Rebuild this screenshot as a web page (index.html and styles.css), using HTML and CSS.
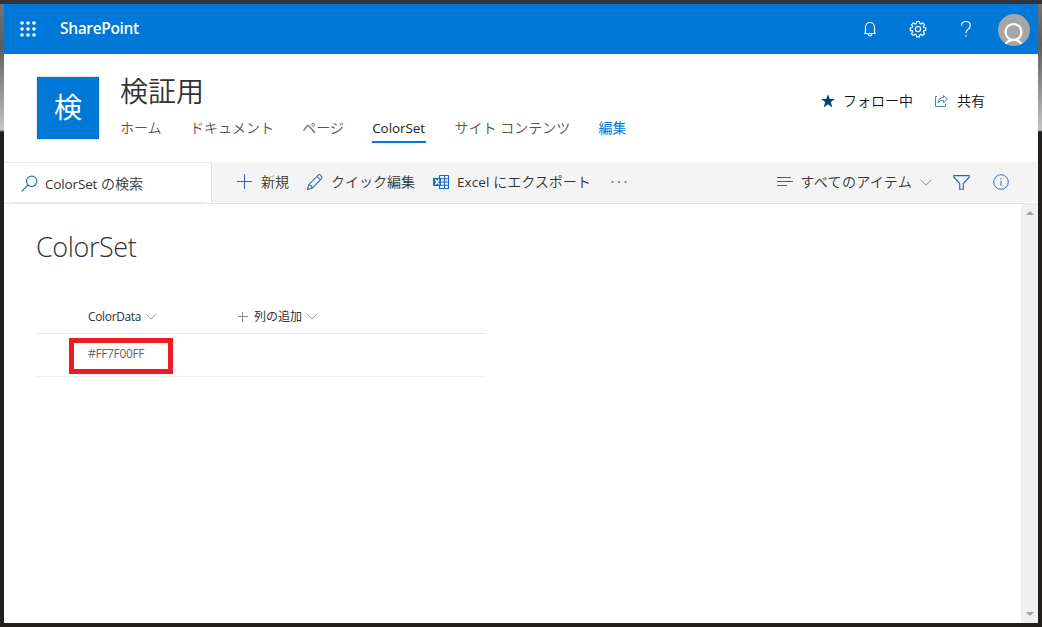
FILE: index.html
```html
<!DOCTYPE html>
<html lang="ja">
<head>
  <meta charset="UTF-8">
  <meta name="viewport" content="width=device-width, initial-scale=1.0">
  <title>ColorSet - 検証用</title>
  <link rel="stylesheet" href="styles.css">
</head>
<body>
  <div class="window">
    <header class="suite-bar">
      <svg class="waffle" width="16" height="16" viewBox="0 0 16 16" fill="#fff">
        <circle cx="2" cy="2" r="1.8"/><circle cx="8" cy="2" r="1.8"/><circle cx="14" cy="2" r="1.8"/>
        <circle cx="2" cy="8" r="1.8"/><circle cx="8" cy="8" r="1.8"/><circle cx="14" cy="8" r="1.8"/>
        <circle cx="2" cy="14" r="1.8"/><circle cx="8" cy="14" r="1.8"/><circle cx="14" cy="14" r="1.8"/>
      </svg>
      <span class="brand">SharePoint</span>
      <div class="suite-actions">
        <svg width="16" height="16" viewBox="0 0 16 16" fill="none" stroke="#fff" stroke-width="1.2">
          <path d="M2 12.5h12M3.5 12.5V6a4.5 4.5 0 0 1 9 0v6.5M6.2 13a1.8 1.8 0 0 0 3.6 0"/>
        </svg>
        <svg width="18" height="18" viewBox="0 0 18 18" fill="none" stroke="#fff" stroke-width="1.2">
          <path d="M7.6 1.5h2.8l.4 2 1.1.5 1.7-1.2 1.9 1.9L14.3 6.4l.4 1.1 2 .3v2.6l-2 .4-.4 1.1 1.2 1.7-1.9 1.9-1.7-1.2-1.1.5-.4 2H7.6l-.4-2-1.1-.5-1.7 1.2-1.9-1.9 1.2-1.7-.4-1.1-2-.4V7.8l2-.3.4-1.1-1.2-1.7 1.9-1.9L6.1 4l1.1-.5z"/>
          <circle cx="9" cy="9.1" r="2.6"/>
        </svg>
        <svg width="12" height="18" viewBox="0 0 12 18" fill="none" stroke="#fff" stroke-width="1.2">
          <path d="M1.5 5.5C1.5 2.8 3.3 1.5 5.8 1.5s4.5 1.5 4.5 4c0 3.6-4.3 4-4.3 7v.8M6 15.2v1.6"/>
        </svg>
        <svg class="avatar" width="32" height="32" viewBox="0 0 32 32">
          <circle cx="16" cy="16" r="16" fill="#a6a6a6"/>
          <g fill="none" stroke="#fff" stroke-width="2.2">
            <circle cx="15.5" cy="18" r="8"/>
            <path d="M7.5 30c2-3 5-4.2 8-4.200s6 1.200 8 4.200"/>
          </g>
        </svg>
      </div>
    </header>

    <section class="site-header">
      <div class="site-logo">検</div>
      <div class="site-info">
        <h1>検証用</h1>
        <nav class="site-nav">
          <a>ホーム</a>
          <a>ドキュメント</a>
          <a>ページ</a>
          <a class="active">ColorSet</a>
          <a>サイト コンテンツ</a>
          <a class="edit">編集</a>
        </nav>
      </div>
      <div class="site-actions">
        <svg width="14" height="14" viewBox="0 0 14 14" fill="#004578">
          <path d="M7 0l1.700 4.900H14L9.800 8l1.500 5.500L7 10.300l-4.300 3.200L4.200 8 0 4.900h5.300z"/>
        </svg>
        <span>フォロー中</span>
        <svg class="share" width="15" height="14" viewBox="0 0 15 14" fill="none" stroke="#4a83c8">
          <path d="M3 2.500H1.500v10h10V9.500M9.500 1.500l4 3.500-4 3.500v-2c-3 0-4.500.8-5.500 2.500.2-3.500 2.200-5.300 5.500-5.500z"/>
        </svg>
        <span>共有</span>
      </div>
    </section>

    <div class="command-bar">
      <div class="search-box">
        <svg width="17" height="17" viewBox="0 0 17 17" fill="none" stroke="#2f6fc0" stroke-width="1.2">
          <circle cx="10.700" cy="6.300" r="5.200"/><path d="M7 10L.7 16.300"/>
        </svg>
        <span><span class="latin">ColorSet</span> の検索</span>
      </div>
      <div class="commands">
        <svg class="icon-new" width="16" height="16" viewBox="0 0 16 16" stroke="#2166b8">
          <path d="M0 7.500h15M7.500 0v15"/>
        </svg>
        <span>新規</span>
        <svg class="icon-edit" width="18" height="18" viewBox="0 0 18 18" fill="none" stroke="#2f6fc0" stroke-width="1.1">
          <path d="M1.500 16.500l1.200-4.800L12.500 1.900c1.200-1.200 4.600 2 3.300 3.500L6.200 15.200zM11 3.400l3.500 3.500M2.700 11.700c2 .2 3.300 1.500 3.500 3.500"/>
        </svg>
        <span>クイック編集</span>
        <svg class="icon-excel" width="17" height="16" viewBox="0 0 17 16">
          <path d="M6.500 1.500h9v13h-9zM6 4.700h10M6 8h10M6 11.300h10M11.500 1.500v13" fill="none" stroke="#1b69c0" stroke-width="1.100"/>
          <path d="M0 4h8v8H0z" fill="#1b69c0"/>
          <path d="M2.200 5.500l4 5M6.200 5.500l-4 5" stroke="#fff" stroke-width="1.300"/>
        </svg>
        <span class="excel-label"><span class="latin">Excel</span> にエクスポート</span>
        <svg class="icon-more" width="16" height="4" viewBox="0 0 16 4" fill="#777">
          <circle cx="1.500" cy="2" r="1.100"/><circle cx="8" cy="2" r="1.100"/><circle cx="14.500" cy="2" r="1.100"/>
        </svg>
      </div>
      <div class="view-options">
        <svg width="16" height="10" viewBox="0 0 16 10" stroke="#1b69c0">
          <path d="M0 .5h14M0 4.500h16M0 8.500h10"/>
        </svg>
        <span>すべてのアイテム</span>
        <svg class="chevron" width="12" height="7" viewBox="0 0 12 7" fill="none" stroke="#888">
          <path d="M.5.7L6 6.200 11.500.7"/>
        </svg>
        <svg class="icon-filter" width="17" height="15" viewBox="0 0 17 15" fill="none" stroke="#1b69c0" stroke-width="1.1">
          <path d="M.8.6h15.400v1.600L10.300 8.500v5.800H6.700V8.500L.8 2.200z"/>
        </svg>
        <svg class="icon-info" width="16" height="16" viewBox="0 0 16 16" fill="none" stroke="#3a73c4">
          <circle cx="8" cy="8" r="7.300"/><path d="M8 6.500V12M8 4v1.300"/>
        </svg>
      </div>
    </div>

    <main class="content">
      <div class="list-page">
        <h2>ColorSet</h2>
        <div class="list">
          <div class="list-row list-head">
            <div class="cell first">
              <span>ColorData</span>
              <svg class="chevron" width="12" height="7" viewBox="0 0 12 7" fill="none" stroke="#999"><path d="M.5.7L6 6.200 11.500.7"/></svg>
            </div>
            <div class="cell">
              <svg class="icon-add" width="10" height="10" viewBox="0 0 10 10" stroke="#888"><path d="M0 4.500h10M4.500 0v10"/></svg>
              <span>列の追加</span>
              <svg class="chevron" width="12" height="7" viewBox="0 0 12 7" fill="none" stroke="#999"><path d="M.5.7L6 6.200 11.500.7"/></svg>
            </div>
          </div>
          <div class="list-row">
            <div class="cell first value">#FF7F00FF</div>
            <div class="highlight"></div>
          </div>
        </div>
      </div>
      <div class="scrollbar">
        <svg width="8" height="4" viewBox="0 0 8 4" fill="#a3a3a3"><path d="M0 4L4 0l4 4z"/></svg>
        <svg width="8" height="4" viewBox="0 0 8 4" fill="#a3a3a3"><path d="M0 0h8L4 4z"/></svg>
      </div>
    </main>
  </div>
</body>
</html>
```
FILE: styles.css
```css
* {
  box-sizing: border-box;
}
body {
  margin: 0;
  padding: 4px;
  height: 627px;
  overflow: hidden;
  background: linear-gradient(#303438 0, #303438 4px, #737373 4px, #5c5c5c 45px, #c4c4c4 130px, #201f1e 132px, #201f1e 100%);
  font-family: "Open Sans", "Noto Sans CJK JP", sans-serif;
  font-size: 14px;
  line-height: 20px;
  color: #333;
}
svg {
  display: block;
  flex: none;
}
.window {
  height: 619px;
  display: flex;
  flex-direction: column;
  background: #fff;
  white-space: nowrap;
}
.suite-bar {
  height: 50px;
  display: flex;
  align-items: center;
  padding: 0 8px 0 16px;
  background: #0078d7;
  color: #fff;
}
.brand {
  margin: -2px 0 0 24px;
  font-size: 15.5px;
  font-weight: 600;
  letter-spacing: -0.35px;
}
.suite-actions {
  margin-left: auto;
  display: flex;
  align-items: center;
}
.suite-actions svg + svg {
  margin-left: 31px;
}
.suite-actions svg:nth-child(3) {
  margin-left: 33px;
}
.suite-actions .avatar {
  margin-left: 26px !important;
  margin-top: 2px;
}
.site-header {
  height: 108px;
  display: flex;
  padding: 22px 53px 0 32px;
}
.site-logo {
  width: 64px;
  height: 64px;
  border: 1px solid #eaeaea;
  background: #0078d7;
  color: #fff;
  font-size: 28px;
  line-height: 60px;
  text-align: center;
}
.site-info {
  margin-left: 20px;
}
h1 {
  margin: -1px 0 0;
  font-size: 28px;
  line-height: 32px;
  font-weight: 350;
}
.site-nav {
  display: flex;
  margin-top: 10px;
  font-weight: 350;
}
.site-nav a {
  height: 26px;
  line-height: 22px;
  margin-right: 28.3px;
  color: #555;
}
.site-nav .active {
  width: 54px;
  color: #222;
  font-size: 13.5px;
  font-weight: 500;
  letter-spacing: -0.1px;
  border-bottom: 2px solid #0078d7;
}
.site-nav .edit {
  color: #0078d7;
  font-weight: 400;
}
.site-actions {
  height: 20px;
  margin: 15px 0 0 auto;
  display: flex;
  align-items: center;
  color: #111;
  font-weight: 350;
}
.site-actions span {
  margin-left: 8px;
}
.site-actions .share {
  margin-left: 21px;
}
.command-bar {
  height: 42px;
  display: flex;
  background: #f4f4f4;
  border-bottom: 1px solid #e6e6e6;
  box-shadow: inset 0 -1px #fff;
}
.search-box {
  width: 208px;
  display: flex;
  align-items: center;
  padding-left: 17px;
  background: linear-gradient(#eaeaea, #eaeaea) 8px 100% / 191px 1px no-repeat #fff;
  border-top: 1px solid #eaeaea;
  border-right: 1px solid #e1e1e1;
  font-weight: 350;
}
.search-box > span {
  margin: 1px 0 0 7px;
}
.latin {
  font-size: 13.5px;
  font-weight: 400;
  letter-spacing: -0.15px;
}
.commands,
.view-options {
  height: 40px;
  display: flex;
  align-items: center;
  font-weight: 350;
}
.commands {
  padding-left: 25px;
}
.icon-new {
  margin-right: 8px;
}
.icon-edit {
  margin: 0 7px 0 17px;
}
.icon-excel {
  margin: 0 7px 0 18px;
}
.excel-label {
  width: 134px;
}
.excel-label .latin {
  letter-spacing: 0.1px;
}
.icon-more {
  margin-left: 20px;
}
.view-options {
  margin-left: auto;
  padding-right: 29px;
}
.view-options span {
  margin: 0 8px;
  letter-spacing: 0.3px;
}
.icon-filter {
  margin: 0 23px 0 21px;
}
.content {
  flex: 1;
  display: flex;
}
.list-page {
  flex: 1;
  padding: 25px 0 0 32px;
}
h2 {
  margin: 0;
  font-size: 27px;
  line-height: 36px;
  font-weight: 300;
  letter-spacing: -0.4px;
}
.list {
  width: 450px;
  margin-top: 34px;
  font-size: 12px;
}
.list-row {
  position: relative;
  height: 43px;
  display: flex;
  border-bottom: 1px solid #f1f1f1;
}
.list-head {
  height: 35px;
  padding-top: 1px;
  align-items: center;
  border-bottom-color: #e6e6e6;
}
.cell {
  display: flex;
  align-items: center;
}
.cell .chevron {
  margin-left: 4px;
}
.first {
  width: 150px;
  margin-left: 52px;
  letter-spacing: -0.35px;
}
.icon-add {
  margin-right: 6px;
}
.value {
  height: 39px;
  color: #666;
}
.highlight {
  position: absolute;
  left: 33px;
  top: 4px;
  width: 104px;
  height: 36px;
  border: 5px solid #ed1c24;
}
.scrollbar {
  width: 17px;
  padding: 7px 0;
  display: flex;
  flex-direction: column;
  justify-content: space-between;
  align-items: center;
  background: #f0f0f0;
}
```
